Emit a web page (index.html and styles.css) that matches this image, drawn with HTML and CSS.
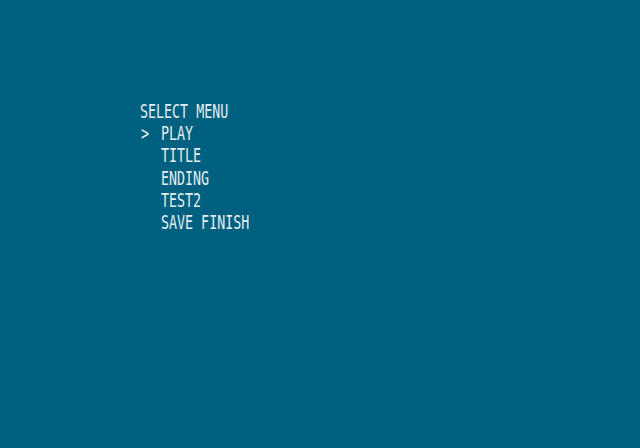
FILE: index.html
```html
<!DOCTYPE html>
<html lang="en">
  <head>
  <meta charset="utf-8">
  <meta name="viewport" content="width=device-width, initial-scale=1">
  <title>Select Menu</title>
  <link rel="stylesheet" href="styles.css">
  </head>
  <body>
    <div class="screen">
      <div class="menu">
        <div class="menu-title">SELECT MENU</div>
        <ul class="menu-list">
          <li class="menu-item selected"><span class="cursor">&gt;</span>PLAY</li>
          <li class="menu-item"><span class="cursor"></span>TITLE</li>
          <li class="menu-item"><span class="cursor"></span>ENDING</li>
          <li class="menu-item"><span class="cursor"></span>TEST2</li>
          <li class="menu-item"><span class="cursor"></span>SAVE FINISH</li>
        </ul>
      </div>
    </div>
  </body>
</html>
```

FILE: styles.css
```css
* {
  margin: 0;
  padding: 0;
  box-sizing: border-box;
}

html, body {
  width: 100%;
  height: 100%;
}

body {
  background: #00607f;
  overflow: hidden;
}

.screen {
  width: 640px;
  height: 448px;
  padding: 101px 0 0 140px;
}

/* small mono text stretched tall, like a doubled-scanline bitmap font */
.menu {
  font-family: 'DejaVu Sans Mono', monospace;
  font-size: 13.33px;
  line-height: 15.17px;
  color: #e4edf1;
  transform: scaleY(1.45);
  transform-origin: top left;
}

.menu-list {
  list-style: none;
}

.menu-item {
  display: flex;
}

.cursor {
  display: inline-block;
  width: 21px;
  padding-left: 1px;
}
```
